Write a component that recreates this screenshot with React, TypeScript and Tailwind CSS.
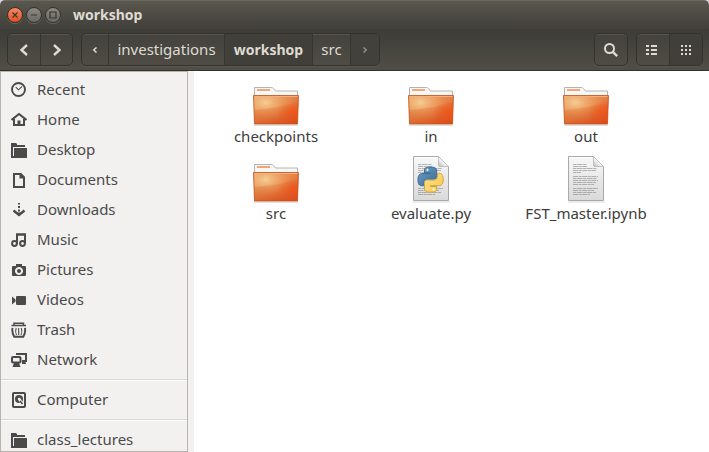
import type { ReactNode } from "react";

function Glyph({ children }: { children: ReactNode }) {
  return (
    <svg width="16" height="16" viewBox="0 0 16 16" fill="none" stroke="none" aria-hidden="true" className="shrink-0">
      {children}
    </svg>
  );
}

const ink = "#4a4a4a";

const folderGlyph = (
  <Glyph>
    <path d="M0 1h5l1 1v1h8v2H2v10H0z" fill={ink} />
    <path d="M3 6h13v9H3z" fill={ink} />
    <path d="M0 14h16v2H0z" fill={ink} />
  </Glyph>
);

const places: { name: string; icon: ReactNode }[] = [
  {
    name: "Recent",
    icon: (
      <Glyph>
        <circle cx="7.500" cy="7.500" r="6.500" stroke={ink} strokeWidth="1.900" />
        <path d="M4.800 5.200l2.700 2.600 3.600-3.400" stroke={ink} strokeWidth="1.100" />
      </Glyph>
    ),
  },
  {
    name: "Home",
    icon: (
      <Glyph>
        <path d="M0.500 8L8 2l7.500 6" stroke={ink} strokeWidth="2" />
        <path d="M3 7v6h10V7" stroke={ink} strokeWidth="2" />
        <path d="M6.500 8.500h3V14h-3z" fill={ink} />
      </Glyph>
    ),
  },
  { name: "Desktop", icon: folderGlyph },
  {
    name: "Documents",
    icon: (
      <Glyph>
        <path d="M3 2h6.500L13 5.500V15H3z" stroke={ink} strokeWidth="2" />
        <path d="M8.500 1H10l4 4v1.500H8.500z" fill={ink} />
      </Glyph>
    ),
  },
  {
    name: "Downloads",
    icon: (
      <Glyph>
        <path d="M7 1h2v1.500H7zM7 4h2v2H7zM7 7.500h2v2H7z" fill={ink} />
        <path d="M2.500 8.500L8 13l5.500-4.500" stroke={ink} strokeWidth="2.400" />
        <path d="M6 10.500h4L8 13z" fill={ink} />
      </Glyph>
    ),
  },
  {
    name: "Music",
    icon: (
      <Glyph>
        <path d="M6 12V2.500h8V11" stroke={ink} strokeWidth="2" />
        <path d="M5 1.500h10v2H5z" fill={ink} />
        <circle cx="3.500" cy="11.500" r="2.400" stroke={ink} strokeWidth="2" />
        <circle cx="11.500" cy="11.500" r="2.400" stroke={ink} strokeWidth="2" />
      </Glyph>
    ),
  },
  {
    name: "Pictures",
    icon: (
      <Glyph>
        <path
          fillRule="evenodd"
          d="M5 2h6v2h3q1 0 1 1v8q0 1-1 1H2q-1 0-1-1V5q0-1 1-1h3zM8 5a4 4 0 1 0 0.010 0z"
          fill={ink}
        />
        <circle cx="8" cy="9" r="2" fill={ink} />
      </Glyph>
    ),
  },
  {
    name: "Videos",
    icon: (
      <Glyph>
        <path d="M1 4.500l3.500 3v2L1 12.500z" fill={ink} />
        <rect x="5" y="4" width="10" height="9" rx="1" fill={ink} />
      </Glyph>
    ),
  },
  {
    name: "Trash",
    icon: (
      <Glyph>
        <path d="M0.500 3.500h14.500M3 3.500V1.200h9.500v2.300" stroke={ink} strokeWidth="1.500" />
        <path d="M1.500 5.800q-.8 4.500 1.700 9h9.100q2.500-4.500 1.700-9" stroke={ink} strokeWidth="1.900" />
        <path d="M5.200 6q-1.400 3.500.3 7M7.700 6v7M10.300 6q1.400 3.500-.3 7" stroke={ink} strokeWidth="1.100" />
      </Glyph>
    ),
  },
  {
    name: "Network",
    icon: (
      <Glyph>
        <path d="M6 3V2h9v7h-3" stroke={ink} strokeWidth="2" />
        <path d="M11 8h3l1 4h-4z" fill={ink} />
        <rect x="1" y="5" width="8.500" height="5.500" rx="1" stroke={ink} strokeWidth="2" />
        <path d="M3 11h5l1.500 4h-8z" fill={ink} />
      </Glyph>
    ),
  },
];

const computerGlyph = (
  <Glyph>
    <rect x="2" y="1" width="12" height="14" rx="1" stroke={ink} strokeWidth="2" />
    <circle cx="8" cy="7" r="4" fill={ink} />
    <path d="M8 6.500l3.500 6" stroke="#f2f1f0" strokeWidth="2.500" />
    <circle cx="8" cy="7" r="1.200" fill="#f2f1f0" />
    <path d="M9 9l2.500 3" stroke={ink} strokeWidth="1.500" />
  </Glyph>
);

function Place({ name, icon }: { name: string; icon: ReactNode }) {
  return (
    <a href="#" className="flex h-[30px] shrink-0 items-center gap-[10px] pl-[10px] text-[#4a4a4a]">
      {icon}
      <span className="pb-0.5">{name}</span>
    </a>
  );
}

function Separator() {
  return <div className="my-1 h-[2px] shrink-0 border-t border-[#d9d7d5] bg-white" />;
}

function FolderIcon() {
  return (
    <svg width="48" height="48" viewBox="0 0 48 48" aria-hidden="true">
      <defs>
        <linearGradient id="folder-base" x1="0" y1="0" x2="1" y2="1">
          <stop offset="0" stopColor="#e3a261" />
          <stop offset="0.5" stopColor="#e68146" />
          <stop offset="1" stopColor="#e34a1a" />
        </linearGradient>
        <radialGradient id="folder-light" cx="0.27" cy="0.25" r="0.7">
          <stop offset="0" stopColor="#f7d49c" stopOpacity="0.9" />
          <stop offset="1" stopColor="#f0954e" stopOpacity="0" />
        </radialGradient>
        <radialGradient id="folder-glow" cx="0.92" cy="0.6" r="0.4">
          <stop offset="0" stopColor="#fb5518" stopOpacity="0.8" />
          <stop offset="1" stopColor="#f05a20" stopOpacity="0" />
        </radialGradient>
        <linearGradient id="folder-shade" x1="0" y1="0" x2="0" y2="1">
          <stop offset="0" stopColor="#d9541a" stopOpacity="0.120" />
          <stop offset="1" stopColor="#c8420e" stopOpacity="0.350" />
        </linearGradient>
      </defs>
      <path d="M2 45.500h44v1.500H2z" fill="#000" opacity="0.120" />
      <path d="M2.500 18V8.500h17q1.200 0 2 1l2 2.500h22V18z" fill="#f7f7f6" stroke="#b5b3b1" />
      <path d="M5 10h13v2H5z" fill="#f3a578" />
      <path d="M1.500 16.500h45l-1 28.500h-43z" fill="url(#folder-base)" />
      <path d="M1.500 16.500h45l-1 28.500h-43z" fill="url(#folder-light)" />
      <path d="M1.500 16.500h45l-1 28.500h-43z" fill="url(#folder-glow)" />
      <path d="M2 31Q28 29 46 23L45.500 45h-43z" fill="url(#folder-shade)" />
      <path d="M2.500 17.500h43" stroke="#f6b07f" />
      <path d="M1.500 16.500h45l-1 28.500h-43z" fill="none" stroke="#c4501e" strokeOpacity="0.800" />
    </svg>
  );
}

const textLines = [8, 10, 12, 14, 16, 20, 22, 24, 26, 28, 32, 34, 36, 38];
const textEnds = [25, 25, 35, 34, 19, 36, 35, 36, 34, 32, 36, 32, 34, 28];

function DocumentIcon({ children }: { children?: ReactNode }) {
  return (
    <svg width="48" height="48" viewBox="0 0 48 48" aria-hidden="true">
      <defs>
        <linearGradient id="sheet" x1="0" y1="0" x2="0" y2="1">
          <stop offset="0" stopColor="#f8f8f8" />
          <stop offset="1" stopColor="#d9d9d9" />
        </linearGradient>
        <linearGradient id="fold" x1="0" y1="1" x2="1" y2="0">
          <stop offset="0" stopColor="#b5b5b5" />
          <stop offset="0.5" stopColor="#ffffff" />
          <stop offset="1" stopColor="#e2e2e2" />
        </linearGradient>
      </defs>
      <path d="M6 45.500h37v1H6z" fill="#000" opacity="0.150" />
      <path d="M6.500 0.500h25l10 10v34h-35z" fill="url(#sheet)" stroke="#a9a9a9" />
      <path d="M7.500 1.500h23.500" stroke="#fff" />
      {textLines.map((y, i) => (
        <path
          key={y}
          d={`M11 ${y + 0.5}H${textEnds[i]}`}
          stroke="#808080"
          strokeOpacity="0.550"
          strokeDasharray={i % 2 ? "5 .6 3 .5" : "3 .5 6 .6"}
        />
      ))}
      <path d="M31.500 0.500v9q0 1 1 1h9z" fill="url(#fold)" stroke="#b5b5b5" strokeWidth="0.800" />
      {children}
    </svg>
  );
}

const snake =
  "M14.250.18l.9.2.73.26.59.3.45.32.34.34.25.34.16.33.1.3.04.26.02.2-.01.13V8.500l-.05.63-.13.55-.21.46-.26.38-.3.31-.33.25-.35.19-.35.14-.33.1-.3.07-.26.04-.21.02H8.770l-.69.05-.59.14-.5.22-.41.27-.33.32-.27.35-.2.36-.15.37-.1.35-.07.32-.04.27-.02.21v3.060H3.170l-.21-.03-.28-.07-.32-.12-.35-.18-.36-.26-.36-.36-.35-.46-.32-.59-.28-.73-.21-.88-.14-1.050-.05-1.230.06-1.220.16-1.040.24-.87.32-.71.36-.57.4-.44.42-.33.42-.24.4-.16.36-.1.32-.05.24-.01h.16l.06.01h8.160v-.83H6.180l-.01-2.750-.02-.37.05-.34.11-.31.17-.28.25-.26.31-.23.38-.2.44-.18.51-.15.58-.12.64-.1.71-.06.77-.04.84-.02 1.270.05z";

function PythonMark() {
  return (
    <g transform="translate(11 11) scale(1.050)">
      <defs>
        <linearGradient id="snake-blue" x1="0" y1="0" x2="1" y2="1">
          <stop offset="0" stopColor="#6ea0c6" />
          <stop offset="1" stopColor="#366a96" />
        </linearGradient>
        <linearGradient id="snake-yellow" x1="1" y1="1" x2="0" y2="0">
          <stop offset="0" stopColor="#ffe594" />
          <stop offset="1" stopColor="#f7c548" />
        </linearGradient>
      </defs>
      <path d={snake} fill="url(#snake-blue)" stroke="#3b6a91" strokeWidth="0.900" />
      <path d={snake} transform="rotate(180 12 12)" fill="url(#snake-yellow)" stroke="#c9a03b" strokeWidth="0.900" />
      <path d="M9 1l.5 1.300 1.300.5-1.300.5L9 4.600l-.5-1.300-1.300-.5 1.300-.5zM15 19.400l.5 1.300 1.300.5-1.300.5-.5 1.300-.5-1.300-1.300-.5 1.300-.5z" fill="#fff" />
    </g>
  );
}

const files: { name: string; icon: ReactNode }[] = [
  { name: "checkpoints", icon: <FolderIcon /> },
  { name: "in", icon: <FolderIcon /> },
  { name: "out", icon: <FolderIcon /> },
  { name: "src", icon: <FolderIcon /> },
  {
    name: "evaluate.py",
    icon: (
      <DocumentIcon>
        <PythonMark />
      </DocumentIcon>
    ),
  },
  { name: "FST_master.ipynb", icon: <DocumentIcon /> },
];

function WindowButton({ label, close, children }: { label: string; close?: boolean; children: ReactNode }) {
  return (
    <button
      aria-label={label}
      className={`flex size-4 items-center justify-center rounded-full border border-[#34332e] shadow-[0_1px_0_#68665d] ${
        close ? "bg-linear-to-b from-[#f58860] to-[#e2501e]" : "bg-linear-to-b from-[#8b8982] to-[#6b6963]"
      }`}
    >
      <svg width="8" height="8" viewBox="0 0 8 8" fill="none" stroke="#35342f" strokeWidth="1.200" className="shrink-0">
        {children}
      </svg>
    </button>
  );
}

function Chevron({ direction, size, color }: { direction: "left" | "right"; size: "large" | "small"; color: string }) {
  const large = size === "large";
  return (
    <svg width={large ? 12 : 6} height={large ? 12 : 6} viewBox="0 0 12 12" fill="none" stroke={color} strokeWidth={large ? 2.4 : 3}>
      <path d={direction === "left" ? "M9 1L3.500 6L9 11" : "M3 1l5.500 5L3 11"} />
    </svg>
  );
}

const group =
  "flex h-[33px] overflow-hidden rounded-[5px] border border-[#33322d] bg-linear-to-b from-[#43423c] to-[#4e4c45] shadow-[inset_0_1px_0_#57554e,0_1px_0_#59574f]";
const cell = "flex items-center justify-center border-l border-[#36352f] first:border-l-0";

export default function App() {
  return (
    <div className="bg-[#d8d4dc]">
      <div className="flex h-screen flex-col overflow-hidden rounded-t-[5px] bg-[#f2f1f0] font-['Noto_Sans','Open_Sans',sans-serif] text-[15px] leading-5">
        <header className="flex h-[29px] shrink-0 items-center gap-3 border-t border-[#6b685f] bg-linear-to-b from-[#5a574e] to-[#403f3a] pl-[7px]">
          <div className="flex gap-[3px]">
            <WindowButton label="Close" close>
              <path d="M1.500 1.500l5 5m0-5l-5 5" />
            </WindowButton>
            <WindowButton label="Minimize">
              <path d="M1 4h6" />
            </WindowButton>
            <WindowButton label="Maximize">
              <path d="M1 1h6v6H1z" />
            </WindowButton>
          </div>
          <h1 className="text-[14px] font-bold text-[#dfdbd2]">workshop</h1>
        </header>

        <nav
          aria-label="Toolbar"
          className="flex h-[42px] shrink-0 items-center gap-2 border-b border-[#32312c] bg-linear-to-b from-[#3d3c37] to-[#504e46] pr-[6px] pl-[7px] text-[#dfdbd2]"
        >
          <div className={group}>
            <button aria-label="Back" className={`${cell} w-8`}>
              <Chevron direction="left" size="large" color="#dfdbd2" />
            </button>
            <button aria-label="Forward" className={`${cell} w-8`}>
              <Chevron direction="right" size="large" color="#dfdbd2" />
            </button>
          </div>
          <div className={group}>
            <button aria-label="Scroll path left" className={`${cell} w-[26px]`}>
              <Chevron direction="left" size="small" color="#dfdbd2" />
            </button>
            <button className={`${cell} w-[116px] pb-0.5`}>investigations</button>
            <button className={`${cell} w-[88px] bg-[#403f39] text-[14px] font-bold`}>workshop</button>
            <button className={`${cell} w-[38px] pb-0.5`}>src</button>
            <button aria-label="Scroll path right" className={`${cell} w-[29px] bg-[#42413b]`}>
              <Chevron direction="right" size="small" color="#8f8d86" />
            </button>
          </div>
          <div className="ml-auto flex gap-2">
            <button aria-label="Search" className={`${group} w-[34px] items-center justify-center`}>
              <svg width="16" height="16" viewBox="0 0 16 16" fill="none" stroke="#dfdbd2">
                <circle cx="6.500" cy="6.500" r="4.500" strokeWidth="2" />
                <path d="M9.800 9.800l4.400 4.400" strokeWidth="2.400" />
              </svg>
            </button>
            <div className={group}>
              <button aria-label="List view" className={`${cell} w-8 pr-1`}>
                <svg width="11" height="10" viewBox="0 0 11 10" fill="#dfdbd2" shapeRendering="crispEdges">
                  <path d="M0 0h3v2H0zM5 0h6v2H5zM0 4h3v2H0zM5 4h6v2H5zM0 8h3v2H0zM5 8h6v2H5z" />
                </svg>
              </button>
              <button aria-label="Icon view" className={`${cell} w-[33px] bg-[#403f39]`}>
                <svg width="10" height="10" viewBox="0 0 10 10" fill="#dfdbd2" shapeRendering="crispEdges">
                  <path d="M0 0h2v2H0zM4 0h2v2H4zM8 0h2v2H8zM0 4h2v2H0zM4 4h2v2H4zM8 4h2v2H8zM0 8h2v2H0zM4 8h2v2H4zM8 8h2v2H8z" />
                </svg>
              </button>
            </div>
          </div>
        </nav>

        <div className="flex min-h-0 flex-1">
          <aside className="flex w-[188px] shrink-0 flex-col overflow-hidden border border-[#b7b3ae] pt-[3px]">
            {places.map((p) => (
              <Place key={p.name} {...p} />
            ))}
            <Separator />
            <Place name="Computer" icon={computerGlyph} />
            <Separator />
            <Place name="class_lectures" icon={folderGlyph} />
          </aside>
          <main className="ml-[6px] grid flex-1 grid-cols-[repeat(auto-fill,154px)] content-start gap-x-px gap-y-[9px] bg-white pt-2 pl-[5px] text-[#3c3c3c]">
            {files.map((f) => (
              <button key={f.name} className="flex flex-col items-center">
                {f.icon}
                <span className="pb-0.5 leading-[18px]">{f.name}</span>
              </button>
            ))}
          </main>
        </div>
      </div>
    </div>
  );
}
